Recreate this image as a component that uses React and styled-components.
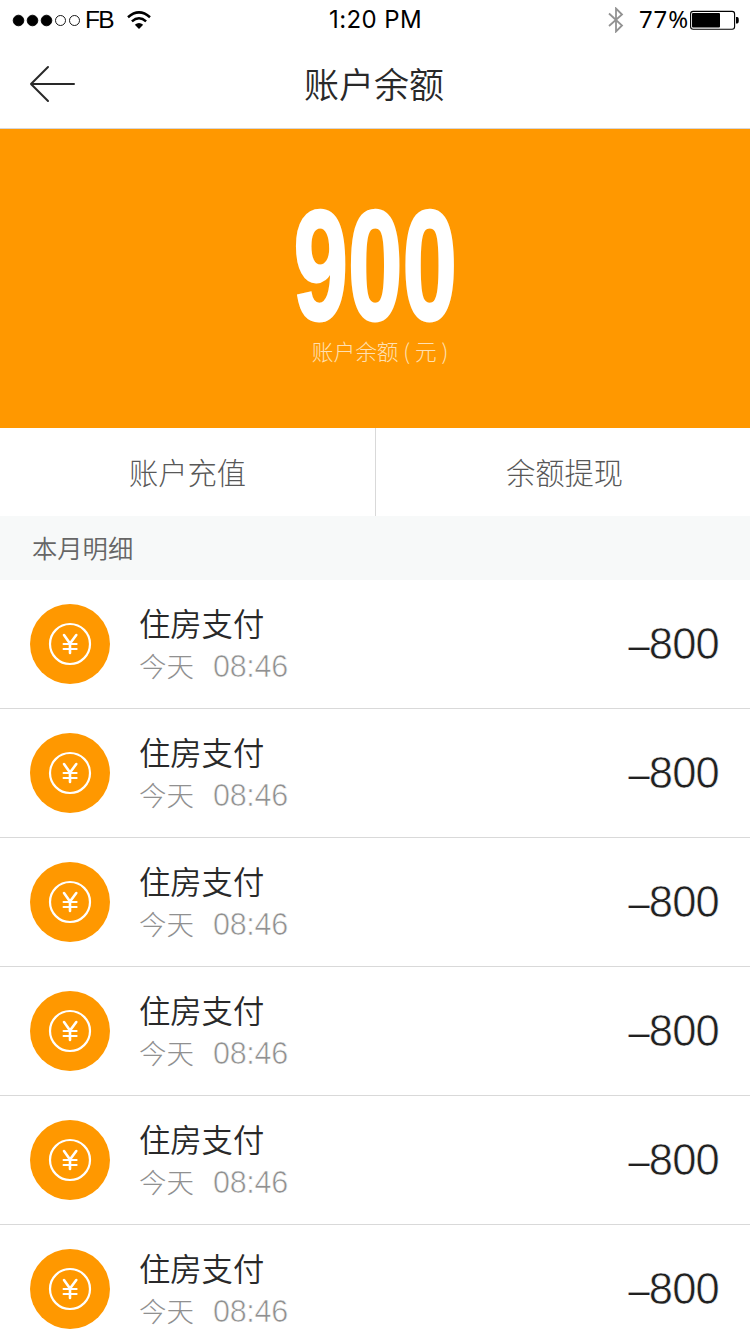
import React from 'react'
import styled, { createGlobalStyle } from 'styled-components';

const GlobalStyle = createGlobalStyle`
    *{
        box-sizing: border-box;
    }

    body{
        margin: 0;
        background: #fff;
        overflow: hidden;
        font-family: "Noto Sans CJK SC", sans-serif;
    }
`

const Page = styled.main`
    display: flex;
    flex-direction: column;
    width: 750px;
    height: 1334px;
    overflow: hidden;
    background: #fff;

    > *{
        flex: none;
    }

    svg{
        display: block;
        flex: none;
    }
`

const StatusBar = styled.div`
    display: grid;
    grid-template-columns: 1fr auto 1fr;
    align-items: center;
    height: 40px;
    padding: 0 11px 0 12px;
    color: #000;
    line-height: 40px;
`

const StatusSide = styled.div`
    display: flex;
    align-items: center;
    justify-content: ${props => props.$end ? 'flex-end' : 'flex-start'};
`

const Carrier = styled.span`
    margin: 0 14px 0 3px;
    font-family: "Liberation Sans", sans-serif;
    font-size: 24.5px;
    letter-spacing: -1.8px;
`

const Clock = styled.span`
    font-family: Inter, sans-serif;
    font-size: 24px;
    letter-spacing: 0.4px;
`

const Percent = styled.span`
    margin-left: 15px;
    font-family: "Noto Sans", sans-serif;
    font-size: 24px;
    letter-spacing: 0.9px;
    line-height: 38px;
    padding-bottom: 2px;
`

const Header = styled.header`
    display: grid;
    grid-template-columns: 75px 1fr 75px;
    align-items: center;
    height: 89px;
    border-bottom: 1px solid #d5d6da;
`

const BackButton = styled.button`
    display: flex;
    padding: 0 0 0 28px;
    border: 0;
    background: none;
`

const Title = styled.h1`
    height: 88px;
    margin: 0 1px 0 -1px;
    color: #292929;
    font-size: 35px;
    font-weight: 350;
    line-height: 85px;
    text-align: center;
`

const Balance = styled.section`
    display: flex;
    flex-direction: column;
    align-items: center;
    height: 299px;
    padding-top: 80px;
    background: #ff9800;
`

const Amount = styled.strong`
    height: 114px;
    color: #fff;
    font-family: "Liberation Sans", sans-serif;
    font-size: 155px;
    font-weight: 700;
    line-height: 114px;
    transform: scaleX(0.632);
    -webkit-text-stroke: 3px #fff;
`

const AmountLabel = styled.span`
    margin: 10px 0 0 10px;
    color: #ffe0b2;
    font-size: 21.7px;
    font-weight: 300;
    line-height: 36px;
    white-space: pre;
`

const Actions = styled.nav`
    display: grid;
    grid-template-columns: 376px 374px;
    height: 88px;
`

const Action = styled.button`
    padding: 0 0 2px ${props => props.$divider ? '0' : '3px'};
    border: 0;
    border-right: ${props => props.$divider ? '1px solid #d9d9d9' : '0'};
    background: #fff;
    color: #585858;
    font-family: inherit;
    font-size: 29.3px;
    font-weight: 300;
    line-height: 84px;
`

const SectionTitle = styled.h2`
    height: 64px;
    margin: 0;
    padding-left: 32px;
    background: #f7f9f9;
    color: #666;
    font-size: 25.3px;
    font-weight: 350;
    line-height: 62px;
`

const List = styled.ul`
    margin: 0;
    padding: 0;
    list-style: none;
`

const Row = styled.li`
    display: flex;
    align-items: center;
    height: 129px;
    padding: 0 31px 0 30px;
    border-bottom: 1px solid #d9d9d9;
`

const Info = styled.div`
    display: flex;
    flex-direction: column;
    flex: 1;
    margin-left: 29px;
`

const Name = styled.span`
    color: #292929;
    font-size: 31.3px;
    font-weight: 350;
    line-height: 42px;
`

const When = styled.span`
    display: flex;
    gap: 18px;
    color: #909090;
    font-size: 27.5px;
    font-weight: 300;
    line-height: 42px;
`

/* the white stroke thins the digits down to a light weight */
const Time = styled.time`
    padding: 1px 0 0 1px;
    font-family: "Liberation Sans", sans-serif;
    font-size: 30.5px;
    letter-spacing: -0.3px;
    -webkit-text-stroke: 0.6px #fff;
`

const Price = styled.span`
    padding-top: 2px;
    color: #202020;
    font-family: "Liberation Sans", sans-serif;
    font-size: 43.5px;
    letter-spacing: -0.8px;
    line-height: 48px;
    -webkit-text-stroke: 0.6px #fff;
`

const Sign = styled.span`
    font-size: 38px;
    -webkit-text-stroke: 0.2px #fff;
`

const records = Array.from({ length: 6 }, (_, id) => ({
    id,
    name: '住房支付',
    day: '今天',
    time: '08:46',
    price: 800,
}))

function Signal() {
   return(
      <svg width="70" height="14" viewBox="0 0 70 14">
          {[0, 1, 2, 3, 4].map(i => (
              <circle key={i} cx={6.5 + i * 14} cy="7.5" r={i < 3 ? 5.3 : 5} fill={i < 3 ? '#000' : 'none'} stroke="#000" strokeWidth="0.9"/>
          ))}
      </svg>
)}

function Wifi() {
   return(
      <svg width="24" height="20" viewBox="0 0 24 20">
          <g fill="none" stroke="#000" strokeWidth="2.5">
              <path d="M1 7.2Q12 -2.4 23 7.2"/>
              <path d="M4.9 11.4Q12 5.2 19.1 11.4"/>
          </g>
          <path d="M7.8 14.8Q12 11.2 16.2 14.8L12 19Z"/>
      </svg>
)}

function Bluetooth() {
   return(
      <svg width="16" height="26" viewBox="0 0 16 26" fill="none" stroke="#929292" strokeWidth="1.8">
          <path d="M1 6.5L14 18.5L8 24.5V1.5L14 7.5L1 19"/>
      </svg>
)}

function Battery() {
   return(
      <svg width="50" height="20" viewBox="0 0 50 20">
          <rect x="1.6" y="1.4" width="44" height="17.8" rx="2.5" fill="none" stroke="#000" strokeWidth="1.1"/>
          <rect x="3" y="3" width="28" height="14.6" rx="1"/>
          <path d="M47 7H48.2Q49.8 7 49.8 10.3T48.2 13.6H47Z"/>
      </svg>
)}

function BackArrow() {
   return(
      <svg width="48" height="38" viewBox="0 0 48 38" fill="none" stroke="#292929" strokeWidth="2" strokeLinecap="round" strokeLinejoin="round">
          <path d="M46 19H3M20 2L3 19L20 36"/>
      </svg>
)}

function Coin() {
   return(
      <svg width="80" height="80" viewBox="0 0 80 80" fill="none" stroke="#fff" strokeLinecap="round">
          <circle cx="40" cy="40" r="40" fill="#ff9800" stroke="none"/>
          <circle cx="40" cy="40" r="20" strokeWidth="2.2"/>
          <path d="M34 31L40 39.5L46.3 31M40 39.5V49" strokeWidth="2.6"/>
          <path d="M33.5 40H46.7M33.5 45H46.7" strokeWidth="1.9"/>
      </svg>
)}

export default function App() {
   return(
      <Page>
          <GlobalStyle/>
          <StatusBar>
              <StatusSide>
                  <Signal/>
                  <Carrier>FB</Carrier>
                  <Wifi/>
              </StatusSide>
              <Clock>1:20 PM</Clock>
              <StatusSide $end>
                  <Bluetooth/>
                  <Percent>77%</Percent>
                  <Battery/>
              </StatusSide>
          </StatusBar>

          <Header>
              <BackButton aria-label="返回"><BackArrow/></BackButton>
              <Title>账户余额</Title>
          </Header>

          <Balance>
              <Amount>900</Amount>
              <AmountLabel>账户余额 ( 元 )</AmountLabel>
          </Balance>

          <Actions>
              <Action $divider>账户充值</Action>
              <Action>余额提现</Action>
          </Actions>

          <SectionTitle>本月明细</SectionTitle>
          <List>
              {records.map(record => (
                  <Row key={record.id}>
                      <Coin/>
                      <Info>
                          <Name>{record.name}</Name>
                          <When>{record.day}<Time>{record.time}</Time></When>
                      </Info>
                      <Price><Sign>–</Sign>{record.price}</Price>
                  </Row>
              ))}
          </List>
      </Page>
)}
